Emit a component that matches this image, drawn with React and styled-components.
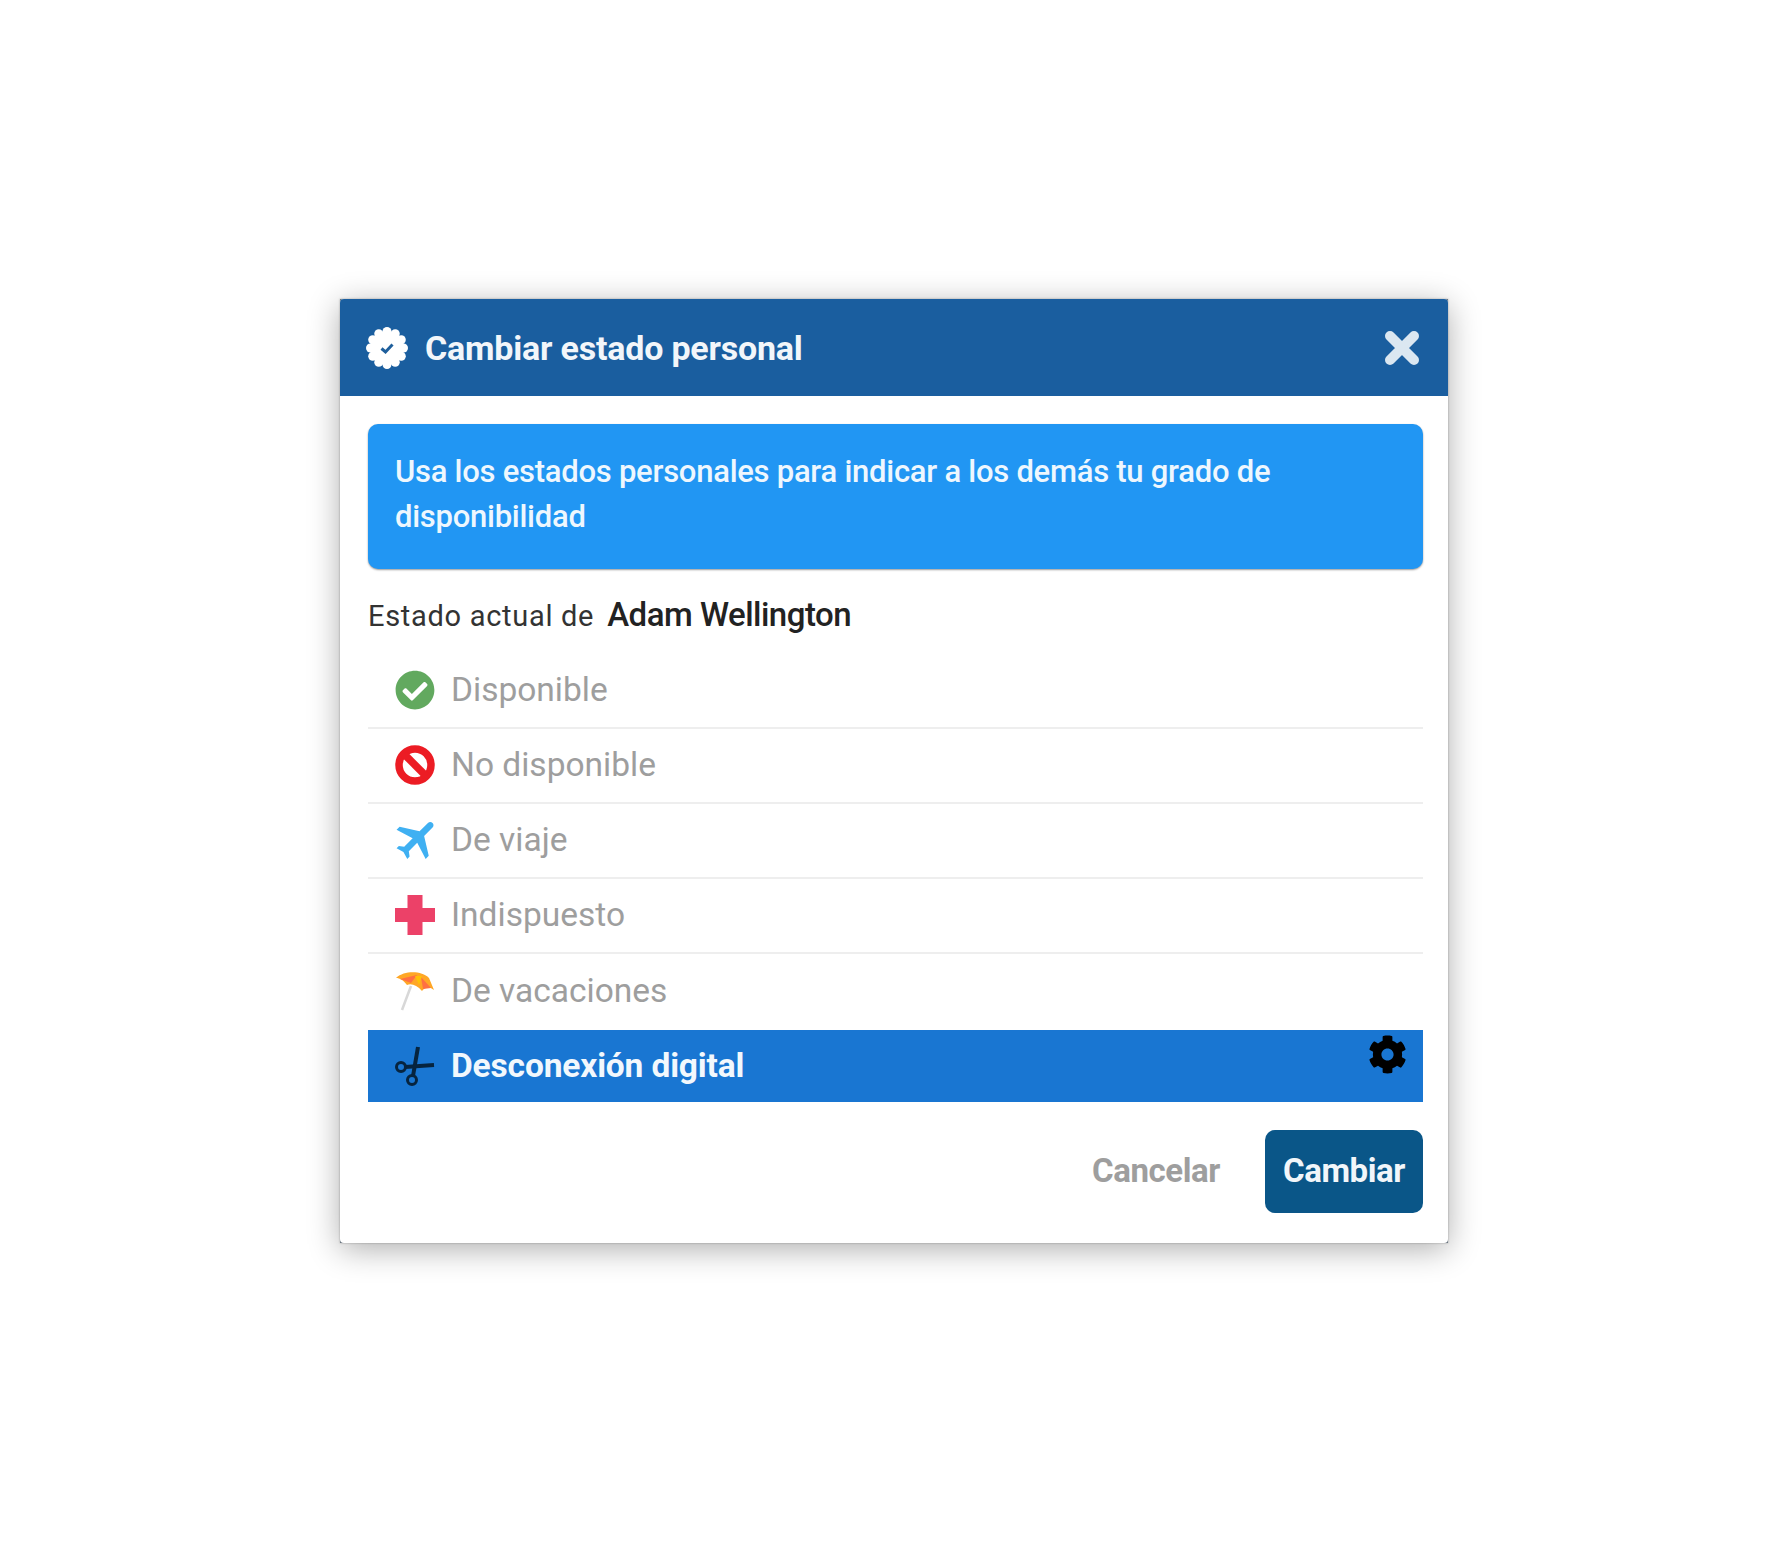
import React from 'react';
import styled, { createGlobalStyle } from 'styled-components';
import { FaCheckCircle, FaCog } from 'react-icons/fa';
import { MdFlight } from 'react-icons/md';

const Global = createGlobalStyle`
  html, body { margin: 0; padding: 0; background: #fff; }
  body { font-family: Roboto, "Liberation Sans", sans-serif; }
`;
const Page = styled.div`
  min-height: 100vh; display: flex; align-items: center; justify-content: center;
`;
const Dialog = styled.div`
  width: 1108px; background: #6b7680;
  box-shadow: 0 6px 30px rgba(0,0,0,.32), 0 0 2px rgba(0,0,0,.3);
`;
const Surface = styled.div`
  background: #fff; border-radius: 4px; overflow: hidden;
`;
const Header = styled.header`
  height: 97px; background: #1a5e9f; color: #fff; display: flex; align-items: center;
  padding: 0 28px 0 26px; gap: 17px;
`;
const Title = styled.h2`
  flex: 1; margin: 0; font-size: 34px; font-weight: 700; letter-spacing: -0.2px; color: #f2f6fa;
`;
const Close = styled.button`
  border: 0; background: none; padding: 0; display: flex;
`;
const Body = styled.div`
  padding: 28px 25px 30px 28px;
`;
const Alert = styled.div`
  background: #2196f3; color: #eef7fe; border-radius: 10px; height: 145px; box-sizing: border-box;
  padding: 25px 27px; font-size: 31px; line-height: 45px; font-weight: 500; letter-spacing: -0.26px;
  box-shadow: 0 1px 2px rgba(0,0,0,.4);
`;
const Current = styled.div`
  display: flex; align-items: baseline; gap: 13px; height: 85px; padding-top: 26px; box-sizing: border-box;
  font-size: 29px; color: #333; letter-spacing: 0.7px;
  line-height: 40px;
`;
const Name = styled.strong`
  font-size: 33px; font-weight: 500; color: #222; letter-spacing: -0.5px;
`;
const List = styled.ul`
  list-style: none; margin: 0; padding: 0;
`;
const Row = styled.li`
  position: relative; display: flex; align-items: center; gap: 16px; box-sizing: border-box;
  height: ${p => (p.$active ? '72px' : p.$last ? '75.5px' : '75px')};
  padding: 0 27px ${p => (p.$active ? 0 : p.$last ? 3 : 2)}px;
  font-size: 33.5px; color: ${p => (p.$active ? '#f2f8fd' : '#9e9e9e')};
  font-weight: ${p => (p.$active ? 700 : 400)};
  letter-spacing: ${p => (p.$active ? '-0.15px' : '0')};
  background: ${p => (p.$active ? '#1976d2' : 'transparent')};
  border-bottom: ${p => (p.$last || p.$active ? '0' : '2px solid #eeeeee')};
`;
const IconBox = styled.span`
  width: ${p => p.$box || 40}px; height: ${p => p.$box || 40}px; display: flex; align-items: center; justify-content: center;
  flex: none; color: ${p => p.$color}; font-size: ${p => p.$size || 40}px;
`;
const Plane = styled(MdFlight)`
  flex: none; transform: translate(3px, -1px) rotate(45deg);
`;
const Gear = styled.span`
  position: absolute; top: 5px; right: 16px; display: flex; color: #000; font-size: 39px;
`;
const Footer = styled.div`
  display: flex; justify-content: flex-end; align-items: center; gap: 45px; margin-top: 28px;
`;
const Cancel = styled.button`
  border: 0; background: none; padding: 0 0 2px; font: 700 33px Roboto, sans-serif; color: #9e9e9e; letter-spacing: -0.4px;
`;
const Submit = styled.button`
  border: 0; width: 158px; height: 83px; border-radius: 10px; background: #0a5688; color: #f2f6fa;
  font: 700 33px Roboto, sans-serif; letter-spacing: -0.4px; padding: 0 0 2px;
`;

const Badge = () => {
  const bumps = Array.from({ length: 12 }, (_, i) => {
    const a = (i * Math.PI) / 6;
    return <circle key={i} cx={21 + 16.5 * Math.cos(a)} cy={21 + 16.5 * Math.sin(a)} r="4.5" fill="#fff" />;
  });
  return (
    <svg width="42" height="42" viewBox="0 0 42 42">
      <circle cx="21" cy="21" r="17" fill="#fff" />
      {bumps}
      <path d="M15.5 21.5 L19.5 25 L26.5 17.5" fill="none" stroke="#1f5f9c" strokeWidth="3" />
    </svg>
  );
};
const CloseMark = () => (
  <svg width="36" height="36" viewBox="0 0 36 36" fill="none" stroke="#dbe7f1" strokeWidth="10" strokeLinecap="round">
    <path d="M6 6 L30 30 M30 6 L6 30" />
  </svg>
);
const Ban = () => (
  <svg width="40" height="40" viewBox="0 0 40 40" fill="none" stroke="#ec1c24" strokeWidth="7.5">
    <circle cx="20" cy="20" r="16" />
    <path d="M9 9 L31 31" />
  </svg>
);
const Cross = () => (
  <svg width="40" height="40" viewBox="0 0 40 40">
    <path d="M12.5 0 H27.5 V13 H40 V27 H27.5 V40 H12.5 V27 H0 V13 H12.5 Z" fill="#ec4168" />
  </svg>
);
const Umbrella = () => (
  <svg width="40" height="40" viewBox="0 0 40 40">
    <path d="M1 7 C10 -1 27 0 34 7 L39 19 C34 15 30 16 27 20 C22 14 16 12 12 14 C8 9 5 7 1 7Z" fill="#ffa726" />
    <path d="M5 8 L22 4 L16 12 Z" fill="#ff7043" />
    <path d="M26 6 L36 17 L28 18 Z" fill="#ff7043" />
    <path d="M20 5 L27 5 L24 14 Z" fill="#ffc107" />
    <path d="M16 15 L7 39" stroke="#d8d8d8" strokeWidth="2.5" fill="none" />
  </svg>
);
const Scissors = () => (
  <svg width="40" height="40" viewBox="0 0 40 40" fill="none" stroke="#06243f">
    <path d="M23 1 L18 30" strokeWidth="4" />
    <path d="M39 19 L10 21" strokeWidth="4" />
    <circle cx="6" cy="21" r="4.5" strokeWidth="3" />
    <circle cx="17" cy="34" r="4.5" strokeWidth="3" />
  </svg>
);

const rows = [
  { label: 'Disponible', icon: <FaCheckCircle />, color: '#62a95f' },
  { label: 'No disponible', icon: <Ban /> },
  { label: 'De viaje', icon: <Plane />, color: '#3fb0f2', size: 52 },
  { label: 'Indispuesto', icon: <Cross /> },
  { label: 'De vacaciones', icon: <Umbrella />, last: true },
];

export default function App() {
  return (
    <Page>
      <Global />
      <Dialog>
        <Surface>
          <Header>
            <IconBox $box={42}><Badge /></IconBox>
            <Title>Cambiar estado personal</Title>
            <Close aria-label="Cerrar"><CloseMark /></Close>
          </Header>
          <Body>
            <Alert>Usa los estados personales para indicar a los demás tu grado de disponibilidad</Alert>
            <Current>Estado actual de <Name>Adam Wellington</Name></Current>
            <List>
              {rows.map(r => (
                <Row key={r.label} $last={r.last}>
                  <IconBox $color={r.color} $size={r.size}>{r.icon}</IconBox>
                  {r.label}
                </Row>
              ))}
              <Row $active>
                <IconBox><Scissors /></IconBox>
                Desconexión digital
                <Gear><FaCog /></Gear>
              </Row>
            </List>
            <Footer>
              <Cancel>Cancelar</Cancel>
              <Submit>Cambiar</Submit>
            </Footer>
          </Body>
        </Surface>
      </Dialog>
    </Page>
  );
}
